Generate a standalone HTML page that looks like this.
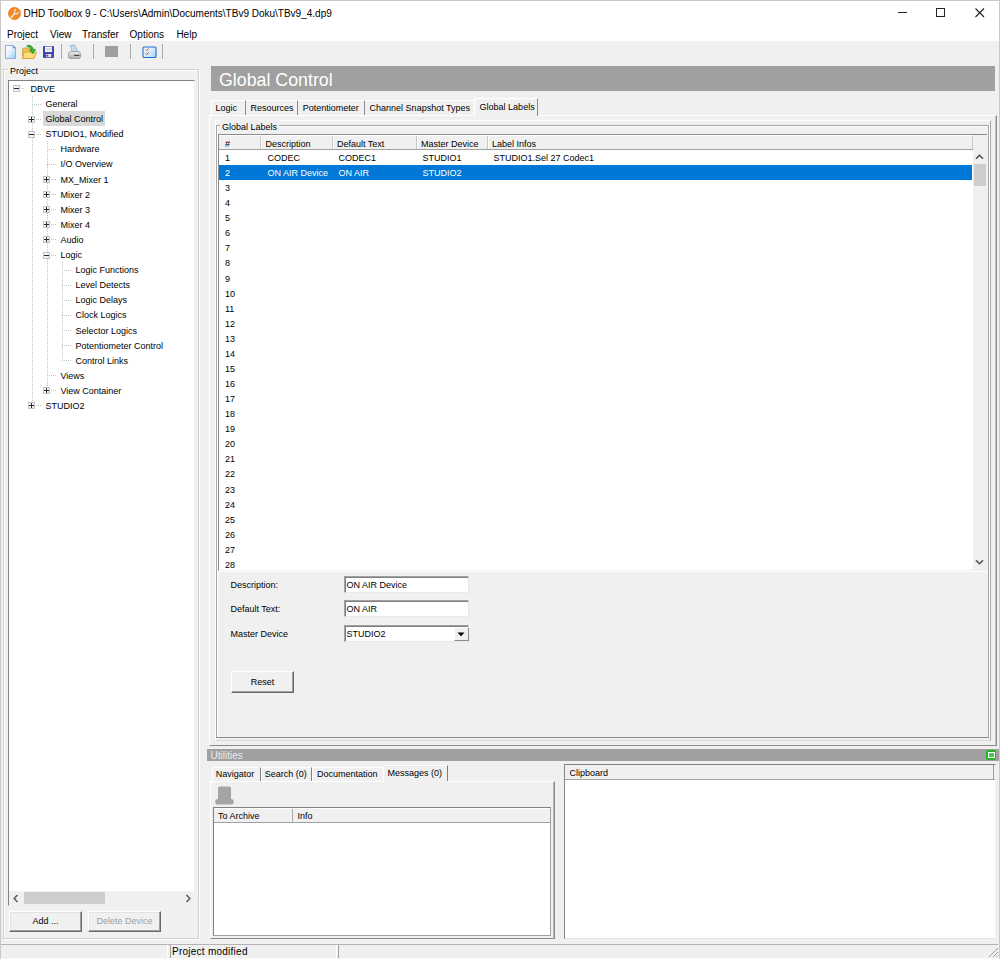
<!DOCTYPE html>
<html><head><meta charset="utf-8"><style>
*{margin:0;padding:0;box-sizing:border-box}
html,body{width:1000px;height:959px;overflow:hidden;background:#f0f0f0;font-family:"Liberation Sans", sans-serif;font-size:9px;color:#000}
.a{position:absolute}
.t{position:absolute;white-space:nowrap;line-height:15px;height:15px}
</style></head><body>
<div class="a" style="left:0;top:0;width:1000px;height:959px;border:1px solid #c9c9c9;border-bottom:none"></div><div class="a" style="left:1px;top:1px;width:998px;height:40px;background:#fff"></div><div class="a" style="left:8px;top:6.5px;width:13px;height:13px;border-radius:50%;background:#f5851f"></div><svg class="a" style="left:8px;top:6.5px" width="13" height="13" viewBox="0 0 13 13"><path d="M3.2 10.3L6.6 6.6" stroke="#ece6e0" stroke-width="1.7" stroke-linecap="round"/><path d="M6.6 6.6L6.4 4.2L7.6 2.6M6.6 6.6L8.9 6.9L10.4 5.7" stroke="#ece6e0" stroke-width="1.4" fill="none" stroke-linecap="round" stroke-linejoin="round"/></svg><div class="t" style="left:23.5px;top:6px;font-size:10px">DHD Toolbox 9 - C:\Users\Admin\Documents\TBv9 Doku\TBv9_4.dp9</div><div class="a" style="left:898px;top:12px;width:9px;height:1px;background:#222"></div><div class="a" style="left:936px;top:8px;width:9px;height:9px;border:1px solid #222"></div><svg class="a" style="left:975px;top:8px" width="10" height="10"><path d="M0.5 0.5L9 9M9 0.5L0.5 9" stroke="#222" stroke-width="1.1"/></svg><div class="t" style="left:7px;top:26.5px;font-size:10px">Project</div><div class="t" style="left:50px;top:26.5px;font-size:10px">View</div><div class="t" style="left:82px;top:26.5px;font-size:10px">Transfer</div><div class="t" style="left:129.6px;top:26.5px;font-size:10px">Options</div><div class="t" style="left:176.4px;top:26.5px;font-size:10px">Help</div><svg class="a" style="left:4px;top:44px" width="14" height="16" viewBox="0 0 14 16">
<defs><linearGradient id="gnd" x1="0" y1="0" x2="1" y2="1"><stop offset="0" stop-color="#ffffff"/><stop offset="0.45" stop-color="#e8f4fc"/><stop offset="1" stop-color="#8fcaf0"/></linearGradient></defs>
<path d="M1.5 1.5H9L11.5 4V14.5H1.5Z" fill="url(#gnd)" stroke="#9ea6dc" stroke-width="1"/>
<path d="M9 1.5V4H11.5Z" fill="#5aa0e0" stroke="#7a9ad8" stroke-width="0.8"/>
</svg><svg class="a" style="left:21px;top:44px" width="17" height="16" viewBox="0 0 17 16">
<path d="M1.5 5.5Q1.5 4 3 4H6.5L7.5 5H12V14.5H2Z" fill="#e8c45a" stroke="#cfa030" stroke-width="1"/>
<path d="M3 8H15.5L13 14.5H1.5Z" fill="#fbdc7c" stroke="#d6a838" stroke-width="1"/>
<path d="M6 1.5Q11 0.5 12.5 5.5L14.5 5.5L11.8 9.8L8.5 5.8L10.5 5.8Q9.5 3 6 2.5Z" fill="#3cb43c" stroke="#1e8a1e" stroke-width="0.7"/>
</svg><svg class="a" style="left:42px;top:45px" width="13" height="14" viewBox="0 0 13 14">
<path d="M1 2Q1 1 2 1H11Q12 1 12 2V12Q12 13 11 13H2Q1 13 1 12Z" fill="#3f47b4"/>
<rect x="3" y="1.6" width="7" height="5.4" fill="#f8f8f8"/>
<rect x="3.6" y="3" width="5.8" height="2.6" fill="#d8d8d8"/>
<rect x="4" y="9" width="5.2" height="3.2" fill="#f0ece0"/>
<rect x="4.5" y="9.6" width="1.8" height="2" fill="#3f47b4"/>
</svg><div class="a" style="left:61px;top:44px;width:1px;height:15px;background:#a8a8a8"></div><div class="a" style="left:93px;top:44px;width:1px;height:15px;background:#a8a8a8"></div><div class="a" style="left:130px;top:44px;width:1px;height:15px;background:#a8a8a8"></div><div class="a" style="left:162px;top:44px;width:1px;height:15px;background:#a8a8a8"></div><svg class="a" style="left:67px;top:44px" width="15" height="16" viewBox="0 0 15 16">
<defs><linearGradient id="gpr" x1="0" y1="0" x2="0" y2="1"><stop offset="0" stop-color="#f4f4f4"/><stop offset="1" stop-color="#a8a8a8"/></linearGradient></defs>
<path d="M3.5 1.5L7.5 1L10.5 7.5L5.5 8.5Z" fill="#bfe0fa" stroke="#8f9ad8" stroke-width="0.7"/>
<path d="M1.5 10Q1.5 7.5 4 7.5H11Q13.5 7.5 13.5 10V12.5Q13.5 14.5 11.5 14.5H3.5Q1.5 14.5 1.5 12.5Z" fill="url(#gpr)" stroke="#909090" stroke-width="0.8"/>
<path d="M7 11.3H12.5" stroke="#2a2a2a" stroke-width="1"/>
<path d="M6 13H12" stroke="#c8c8c8" stroke-width="0.8"/>
</svg><div class="a" style="left:105px;top:45.5px;width:13px;height:11px;background:#a0a0a0"></div><svg class="a" style="left:142px;top:46px" width="15" height="12" viewBox="0 0 15 12">
<defs><linearGradient id="gck" x1="0" y1="0" x2="1" y2="1"><stop offset="0" stop-color="#ffffff"/><stop offset="1" stop-color="#a8d4f4"/></linearGradient></defs>
<rect x="1" y="1" width="13" height="10.5" rx="1" fill="url(#gck)" stroke="#1c6fd0" stroke-width="1.1"/>
<path d="M3.5 3.4L4.7 4.6L6.8 2.6M3.5 7.2L4.7 8.4L6.8 6.4" stroke="#c84a28" stroke-width="1" fill="none"/>
</svg><div class="a" style="left:3px;top:69px;width:196px;height:870px;border:1px solid #cfcfcf;box-shadow:inset 1px 1px 0 #fff,1px 1px 0 #fff"></div><div class="t" style="left:8px;top:64px;padding:0 2px;background:#f0f0f0">Project</div><div class="a" style="left:8px;top:80px;width:187px;height:826px;background:#fff;border-top:1px solid #828282;border-left:1px solid #828282;border-right:1px solid #f0f0f0;border-bottom:1px solid #f0f0f0"></div><div class="a" style="left:32px;top:96px;width:1px;height:310px;background:repeating-linear-gradient(#c4c4c4 0 1px,transparent 1px 2px)"></div><div class="a" style="left:47px;top:141px;width:1px;height:250px;background:repeating-linear-gradient(#c4c4c4 0 1px,transparent 1px 2px)"></div><div class="a" style="left:62px;top:262px;width:1px;height:99px;background:repeating-linear-gradient(#c4c4c4 0 1px,transparent 1px 2px)"></div><div class="a" style="left:21px;top:88px;width:4px;height:1px;background:repeating-linear-gradient(90deg,#c4c4c4 0 1px,transparent 1px 2px)"></div><div class="a" style="left:13px;top:85px;width:7px;height:7px;border:1px solid #c4c4c4;background:linear-gradient(135deg,#fff,#e8e8e8)"></div><div class="a" style="left:14px;top:88px;width:5px;height:1px;background:#2a2a2a"></div><div class="t" style="left:30.5px;top:82.0px">DBVE</div><div class="a" style="left:32px;top:104px;width:8.5px;height:1px;background:repeating-linear-gradient(90deg,#c4c4c4 0 1px,transparent 1px 2px)"></div><div class="t" style="left:45.5px;top:97.095px">General</div><div class="a" style="left:36px;top:119px;width:4.5px;height:1px;background:repeating-linear-gradient(90deg,#c4c4c4 0 1px,transparent 1px 2px)"></div><div class="a" style="left:28px;top:116px;width:7px;height:7px;border:1px solid #c4c4c4;background:linear-gradient(135deg,#fff,#e8e8e8)"></div><div class="a" style="left:29px;top:119px;width:5px;height:1px;background:#2a2a2a"></div><div class="a" style="left:31px;top:117px;width:1px;height:5px;background:#2a2a2a"></div><div class="a" style="left:43px;top:110.69px;width:62px;height:15px;background:#d9d9d9"></div><div class="t" style="left:45.5px;top:112.19px">Global Control</div><div class="a" style="left:36px;top:134px;width:4.5px;height:1px;background:repeating-linear-gradient(90deg,#c4c4c4 0 1px,transparent 1px 2px)"></div><div class="a" style="left:28px;top:131px;width:7px;height:7px;border:1px solid #c4c4c4;background:linear-gradient(135deg,#fff,#e8e8e8)"></div><div class="a" style="left:29px;top:134px;width:5px;height:1px;background:#2a2a2a"></div><div class="t" style="left:45.5px;top:127.285px">STUDIO1, Modified</div><div class="a" style="left:47px;top:149px;width:8.5px;height:1px;background:repeating-linear-gradient(90deg,#c4c4c4 0 1px,transparent 1px 2px)"></div><div class="t" style="left:60.5px;top:142.38px">Hardware</div><div class="a" style="left:47px;top:164px;width:8.5px;height:1px;background:repeating-linear-gradient(90deg,#c4c4c4 0 1px,transparent 1px 2px)"></div><div class="t" style="left:60.5px;top:157.47500000000002px">I/O Overview</div><div class="a" style="left:51px;top:179px;width:4.5px;height:1px;background:repeating-linear-gradient(90deg,#c4c4c4 0 1px,transparent 1px 2px)"></div><div class="a" style="left:43px;top:176px;width:7px;height:7px;border:1px solid #c4c4c4;background:linear-gradient(135deg,#fff,#e8e8e8)"></div><div class="a" style="left:44px;top:179px;width:5px;height:1px;background:#2a2a2a"></div><div class="a" style="left:46px;top:177px;width:1px;height:5px;background:#2a2a2a"></div><div class="t" style="left:60.5px;top:172.57px">MX_Mixer 1</div><div class="a" style="left:51px;top:194px;width:4.5px;height:1px;background:repeating-linear-gradient(90deg,#c4c4c4 0 1px,transparent 1px 2px)"></div><div class="a" style="left:43px;top:191px;width:7px;height:7px;border:1px solid #c4c4c4;background:linear-gradient(135deg,#fff,#e8e8e8)"></div><div class="a" style="left:44px;top:194px;width:5px;height:1px;background:#2a2a2a"></div><div class="a" style="left:46px;top:192px;width:1px;height:5px;background:#2a2a2a"></div><div class="t" style="left:60.5px;top:187.66500000000002px">Mixer 2</div><div class="a" style="left:51px;top:209px;width:4.5px;height:1px;background:repeating-linear-gradient(90deg,#c4c4c4 0 1px,transparent 1px 2px)"></div><div class="a" style="left:43px;top:206px;width:7px;height:7px;border:1px solid #c4c4c4;background:linear-gradient(135deg,#fff,#e8e8e8)"></div><div class="a" style="left:44px;top:209px;width:5px;height:1px;background:#2a2a2a"></div><div class="a" style="left:46px;top:207px;width:1px;height:5px;background:#2a2a2a"></div><div class="t" style="left:60.5px;top:202.76px">Mixer 3</div><div class="a" style="left:51px;top:224px;width:4.5px;height:1px;background:repeating-linear-gradient(90deg,#c4c4c4 0 1px,transparent 1px 2px)"></div><div class="a" style="left:43px;top:221px;width:7px;height:7px;border:1px solid #c4c4c4;background:linear-gradient(135deg,#fff,#e8e8e8)"></div><div class="a" style="left:44px;top:224px;width:5px;height:1px;background:#2a2a2a"></div><div class="a" style="left:46px;top:222px;width:1px;height:5px;background:#2a2a2a"></div><div class="t" style="left:60.5px;top:217.85500000000002px">Mixer 4</div><div class="a" style="left:51px;top:239px;width:4.5px;height:1px;background:repeating-linear-gradient(90deg,#c4c4c4 0 1px,transparent 1px 2px)"></div><div class="a" style="left:43px;top:236px;width:7px;height:7px;border:1px solid #c4c4c4;background:linear-gradient(135deg,#fff,#e8e8e8)"></div><div class="a" style="left:44px;top:239px;width:5px;height:1px;background:#2a2a2a"></div><div class="a" style="left:46px;top:237px;width:1px;height:5px;background:#2a2a2a"></div><div class="t" style="left:60.5px;top:232.95000000000002px">Audio</div><div class="a" style="left:51px;top:255px;width:4.5px;height:1px;background:repeating-linear-gradient(90deg,#c4c4c4 0 1px,transparent 1px 2px)"></div><div class="a" style="left:43px;top:252px;width:7px;height:7px;border:1px solid #c4c4c4;background:linear-gradient(135deg,#fff,#e8e8e8)"></div><div class="a" style="left:44px;top:255px;width:5px;height:1px;background:#2a2a2a"></div><div class="t" style="left:60.5px;top:248.04500000000002px">Logic</div><div class="a" style="left:62px;top:270px;width:8.5px;height:1px;background:repeating-linear-gradient(90deg,#c4c4c4 0 1px,transparent 1px 2px)"></div><div class="t" style="left:75.5px;top:263.14px">Logic Functions</div><div class="a" style="left:62px;top:285px;width:8.5px;height:1px;background:repeating-linear-gradient(90deg,#c4c4c4 0 1px,transparent 1px 2px)"></div><div class="t" style="left:75.5px;top:278.235px">Level Detects</div><div class="a" style="left:62px;top:300px;width:8.5px;height:1px;background:repeating-linear-gradient(90deg,#c4c4c4 0 1px,transparent 1px 2px)"></div><div class="t" style="left:75.5px;top:293.33000000000004px">Logic Delays</div><div class="a" style="left:62px;top:315px;width:8.5px;height:1px;background:repeating-linear-gradient(90deg,#c4c4c4 0 1px,transparent 1px 2px)"></div><div class="t" style="left:75.5px;top:308.425px">Clock Logics</div><div class="a" style="left:62px;top:330px;width:8.5px;height:1px;background:repeating-linear-gradient(90deg,#c4c4c4 0 1px,transparent 1px 2px)"></div><div class="t" style="left:75.5px;top:323.52px">Selector Logics</div><div class="a" style="left:62px;top:345px;width:8.5px;height:1px;background:repeating-linear-gradient(90deg,#c4c4c4 0 1px,transparent 1px 2px)"></div><div class="t" style="left:75.5px;top:338.615px">Potentiometer Control</div><div class="a" style="left:62px;top:360px;width:8.5px;height:1px;background:repeating-linear-gradient(90deg,#c4c4c4 0 1px,transparent 1px 2px)"></div><div class="t" style="left:75.5px;top:353.71000000000004px">Control Links</div><div class="a" style="left:47px;top:375px;width:8.5px;height:1px;background:repeating-linear-gradient(90deg,#c4c4c4 0 1px,transparent 1px 2px)"></div><div class="t" style="left:60.5px;top:368.805px">Views</div><div class="a" style="left:51px;top:390px;width:4.5px;height:1px;background:repeating-linear-gradient(90deg,#c4c4c4 0 1px,transparent 1px 2px)"></div><div class="a" style="left:43px;top:387px;width:7px;height:7px;border:1px solid #c4c4c4;background:linear-gradient(135deg,#fff,#e8e8e8)"></div><div class="a" style="left:44px;top:390px;width:5px;height:1px;background:#2a2a2a"></div><div class="a" style="left:46px;top:388px;width:1px;height:5px;background:#2a2a2a"></div><div class="t" style="left:60.5px;top:383.90000000000003px">View Container</div><div class="a" style="left:36px;top:405px;width:4.5px;height:1px;background:repeating-linear-gradient(90deg,#c4c4c4 0 1px,transparent 1px 2px)"></div><div class="a" style="left:28px;top:402px;width:7px;height:7px;border:1px solid #c4c4c4;background:linear-gradient(135deg,#fff,#e8e8e8)"></div><div class="a" style="left:29px;top:405px;width:5px;height:1px;background:#2a2a2a"></div><div class="a" style="left:31px;top:403px;width:1px;height:5px;background:#2a2a2a"></div><div class="t" style="left:45.5px;top:398.995px">STUDIO2</div><div class="a" style="left:9px;top:891px;width:185px;height:14px;background:#f0f0f0"></div><div class="a" style="left:24px;top:892px;width:81px;height:12px;background:#cdcdcd"></div><svg class="a" style="left:13px;top:894px" width="6" height="9"><path d="M4.5 1L1.2 4.5L4.5 8" stroke="#606060" stroke-width="1.6" fill="none"/></svg><svg class="a" style="left:185px;top:894px" width="6" height="9"><path d="M1.5 1L4.8 4.5L1.5 8" stroke="#606060" stroke-width="1.6" fill="none"/></svg><div class="a" style="left:9px;top:911px;width:73px;height:21px;background:#f0f0f0;border-top:1px solid #fff;border-left:1px solid #fff;border-right:1px solid #696969;border-bottom:1px solid #696969;box-shadow:inset -1px -1px 0 #a0a0a0,inset 1px 1px 0 #e3e3e3"></div><div class="t" style="left:9px;top:914.0px;width:73px;text-align:center;color:#000">Add ...</div><div class="a" style="left:88px;top:911px;width:73px;height:21px;background:#f0f0f0;border-top:1px solid #fff;border-left:1px solid #fff;border-right:1px solid #696969;border-bottom:1px solid #696969;box-shadow:inset -1px -1px 0 #a0a0a0,inset 1px 1px 0 #e3e3e3"></div><div class="t" style="left:88px;top:914.0px;width:73px;text-align:center;color:#a0a0a0">Delete Device</div><div class="a" style="left:211px;top:66px;width:784px;height:25px;background:#a0a0a0"></div><div class="t" style="left:219px;top:68px;height:24px;line-height:24px;font-size:17.8px;color:#fff">Global Control</div><div class="a" style="left:209px;top:115px;width:788px;height:631px;border-top:1px solid #fff;border-left:1px solid #fff;border-right:1px solid #8c8c8c;border-bottom:1px solid #8c8c8c;box-shadow:inset -1px 0 0 #c4c4c4"></div><div class="a" style="left:211px;top:100px;width:35px;height:15px;border-top:1px solid #fff;border-left:1px solid #fff;border-right:1px solid #8c8c8c"></div><div class="t" style="left:215.5px;top:101px">Logic</div><div class="a" style="left:246px;top:100px;width:52px;height:15px;border-top:1px solid #fff;border-right:1px solid #8c8c8c"></div><div class="t" style="left:250.6px;top:101px">Resources</div><div class="a" style="left:298px;top:100px;width:67px;height:15px;border-top:1px solid #fff;border-right:1px solid #8c8c8c"></div><div class="t" style="left:302.8px;top:101px">Potentiometer</div><div class="a" style="left:365px;top:100px;width:110px;height:15px;border-top:1px solid #fff;border-right:1px solid #8c8c8c"></div><div class="t" style="left:369.6px;top:101px">Channel Snapshot Types</div><div class="a" style="left:474px;top:98px;width:64px;height:18px;background:#f0f0f0;border-top:1px solid #fff;border-left:1px solid #fff;border-right:1px solid #8c8c8c"></div><div class="t" style="left:479.6px;top:100px">Global Labels</div><div class="a" style="left:215px;top:120px;width:776px;height:621px;border-top:1px solid #fff;border-left:1px solid #fff;border-right:1px solid #a8a8a8;border-bottom:1px solid #d8d8d8"></div><div class="a" style="left:216px;top:125px;width:773px;height:613px;border-top:1px solid #a8a8a8;border-left:1px solid #a8a8a8;border-right:1px solid #a8a8a8;border-bottom:1px solid #8c8c8c;box-shadow:inset 1px 1px 0 #fff"></div><div class="a" style="left:989px;top:125px;width:1px;height:613px;background:#fff"></div><div class="t" style="left:220px;top:120px;padding:0 2px;background:#f0f0f0">Global Labels</div><div class="a" style="left:218px;top:571px;width:770px;height:1px;background:#fff"></div><div class="a" style="left:218px;top:134px;width:769px;height:437px;background:#fff;border-top:1px solid #8c8c8c;border-left:1px solid #8c8c8c;border-bottom:1px solid #f0f0f0"></div><div class="a" style="left:219px;top:135px;width:754px;height:15px;background:#f0f0f0;border-bottom:1px solid #a0a0a0;border-top:1px solid #fff"></div><div class="t" style="left:225px;top:137px">#</div><div class="t" style="left:265.5px;top:137px">Description</div><div class="t" style="left:337px;top:137px">Default Text</div><div class="t" style="left:421px;top:137px">Master Device</div><div class="t" style="left:492px;top:137px">Label Infos</div><div class="a" style="left:260px;top:136px;width:1px;height:13px;background:#c8c8c8"></div><div class="a" style="left:261px;top:136px;width:1px;height:13px;background:#fff"></div><div class="a" style="left:332px;top:136px;width:1px;height:13px;background:#c8c8c8"></div><div class="a" style="left:333px;top:136px;width:1px;height:13px;background:#fff"></div><div class="a" style="left:416px;top:136px;width:1px;height:13px;background:#c8c8c8"></div><div class="a" style="left:417px;top:136px;width:1px;height:13px;background:#fff"></div><div class="a" style="left:487px;top:136px;width:1px;height:13px;background:#c8c8c8"></div><div class="a" style="left:488px;top:136px;width:1px;height:13px;background:#fff"></div><div class="a" style="left:972px;top:136px;width:1px;height:13px;background:#c8c8c8"></div><div class="a" style="left:973px;top:136px;width:1px;height:13px;background:#fff"></div><div class="t" style="left:225px;top:151px;color:#000">1</div><div class="t" style="left:267.5px;top:151px">CODEC</div><div class="t" style="left:338.5px;top:151px">CODEC1</div><div class="t" style="left:422.5px;top:151px">STUDIO1</div><div class="t" style="left:493.5px;top:151px">STUDIO1.Sel 27 Codec1</div><div class="a" style="left:219px;top:165px;width:753px;height:15px;background:#0078d7"></div><div class="t" style="left:225px;top:166px;color:#fff">2</div><div class="t" style="left:267.5px;top:166px;color:#fff">ON AIR Device</div><div class="t" style="left:338.5px;top:166px;color:#fff">ON AIR</div><div class="t" style="left:422.5px;top:166px;color:#fff">STUDIO2</div><div class="t" style="left:225px;top:181px;color:#000">3</div><div class="t" style="left:225px;top:196px;color:#000">4</div><div class="t" style="left:225px;top:211px;color:#000">5</div><div class="t" style="left:225px;top:226px;color:#000">6</div><div class="t" style="left:225px;top:241px;color:#000">7</div><div class="t" style="left:225px;top:256px;color:#000">8</div><div class="t" style="left:225px;top:272px;color:#000">9</div><div class="t" style="left:225px;top:287px;color:#000">10</div><div class="t" style="left:225px;top:302px;color:#000">11</div><div class="t" style="left:225px;top:317px;color:#000">12</div><div class="t" style="left:225px;top:332px;color:#000">13</div><div class="t" style="left:225px;top:347px;color:#000">14</div><div class="t" style="left:225px;top:362px;color:#000">15</div><div class="t" style="left:225px;top:377px;color:#000">16</div><div class="t" style="left:225px;top:392px;color:#000">17</div><div class="t" style="left:225px;top:407px;color:#000">18</div><div class="t" style="left:225px;top:422px;color:#000">19</div><div class="t" style="left:225px;top:437px;color:#000">20</div><div class="t" style="left:225px;top:452px;color:#000">21</div><div class="t" style="left:225px;top:467px;color:#000">22</div><div class="t" style="left:225px;top:483px;color:#000">23</div><div class="t" style="left:225px;top:498px;color:#000">24</div><div class="t" style="left:225px;top:513px;color:#000">25</div><div class="t" style="left:225px;top:528px;color:#000">26</div><div class="t" style="left:225px;top:543px;color:#000">27</div><div class="t" style="left:225px;top:558px;color:#000">28</div><div class="a" style="left:973px;top:135px;width:14px;height:435px;background:#f0f0f0"></div><div class="a" style="left:973.5px;top:164px;width:12.5px;height:22px;background:#cdcdcd"></div><svg class="a" style="left:975px;top:154px" width="9" height="6"><path d="M1 4.8L4.5 1.3L8 4.8" stroke="#505050" stroke-width="1.6" fill="none"/></svg><svg class="a" style="left:975px;top:559px" width="9" height="6"><path d="M1 1.2L4.5 4.7L8 1.2" stroke="#505050" stroke-width="1.6" fill="none"/></svg><div class="t" style="left:230.5px;top:578px">Description:</div><div class="t" style="left:230.5px;top:602px">Default Text:</div><div class="t" style="left:230.5px;top:627px">Master Device</div><div class="a" style="left:344px;top:576px;width:125px;height:17px;background:#fff;border-top:1px solid #a0a0a0;border-left:1px solid #a0a0a0;border-right:1px solid #e8e8e8;border-bottom:1px solid #e8e8e8;box-shadow:inset 1px 1px 0 #808080"></div><div class="t" style="left:346.5px;top:578px">ON AIR Device</div><div class="a" style="left:344px;top:600px;width:125px;height:17px;background:#fff;border-top:1px solid #a0a0a0;border-left:1px solid #a0a0a0;border-right:1px solid #e8e8e8;border-bottom:1px solid #e8e8e8;box-shadow:inset 1px 1px 0 #808080"></div><div class="t" style="left:346.5px;top:602px">ON AIR</div><div class="a" style="left:344px;top:625px;width:125px;height:17px;background:#fff;border-top:1px solid #a0a0a0;border-left:1px solid #a0a0a0;border-right:1px solid #e8e8e8;border-bottom:1px solid #e8e8e8;box-shadow:inset 1px 1px 0 #808080"></div><div class="t" style="left:346.5px;top:627px">STUDIO2</div><div class="a" style="left:454px;top:627px;width:15px;height:14px;background:#f0f0f0;border-top:1px solid #fff;border-left:1px solid #fff;border-right:1px solid #8c8c8c;border-bottom:1px solid #8c8c8c"></div><svg class="a" style="left:457px;top:631.5px" width="9" height="5"><path d="M0.5 0.5H7.5L4 4.2Z" fill="#000"/></svg><div class="a" style="left:231px;top:671px;width:63px;height:22px;background:#f0f0f0;border-top:1px solid #fff;border-left:1px solid #fff;border-right:1px solid #696969;border-bottom:1px solid #696969;box-shadow:inset -1px -1px 0 #a0a0a0"></div><div class="t" style="left:231px;top:674.5px;width:63px;text-align:center">Reset</div><div class="a" style="left:207px;top:749px;width:792px;height:12px;background:#a0a0a0"></div><div class="t" style="left:210.5px;top:748px;font-size:10px;line-height:15px;color:#ececec">Utilities</div><div class="a" style="left:986px;top:750px;width:10px;height:10px;border-radius:2px;background:#22b722"></div><div class="a" style="left:987.5px;top:752px;width:7px;height:6px;background:#4ccc4c;border:1px solid #fff"></div><div class="a" style="left:212px;top:767px;width:48.60000000000002px;height:14px;border-top:1px solid #fff;border-left:1px solid #fff;border-right:1px solid #808080"></div><div class="t" style="left:215.8px;top:767px">Navigator</div><div class="a" style="left:260.6px;top:767px;width:51.599999999999966px;height:14px;border-top:1px solid #fff;border-left:1px solid #fff;border-right:1px solid #808080"></div><div class="t" style="left:264.8px;top:767px">Search (0)</div><div class="a" style="left:312.2px;top:767px;width:71.40000000000003px;height:14px;border-top:1px solid #fff;border-left:1px solid #fff;border-right:1px solid #808080"></div><div class="t" style="left:317px;top:767px">Documentation</div><div class="a" style="left:382.5px;top:765px;width:65px;height:17px;background:#f0f0f0;border-top:1px solid #fff;border-left:1px solid #fff;border-right:1px solid #808080"></div><div class="t" style="left:387.4px;top:765.5px">Messages (0)</div><div class="a" style="left:210px;top:781px;width:345px;height:158px;border-top:1px solid #fff;border-left:1px solid #fff;border-right:1px solid #8c8c8c;border-bottom:1px solid #8c8c8c;box-shadow:inset -1px 0 0 #b8b8b8"></div><div class="a" style="left:383.5px;top:780.5px;width:63px;height:1.5px;background:#f0f0f0"></div><svg class="a" style="left:214px;top:785px" width="21" height="21" viewBox="0 0 21 21">
<path d="M4 3Q4 1.5 5.5 1.5H15.5Q17 1.5 17 3V15H4Z" fill="#a4a4a4"/>
<path d="M1.2 16.5Q1.2 14 3.5 14H17.5Q19.8 14 19.8 16.5Q19.8 19.5 17.5 19.5H3.5Q1.2 19.5 1.2 16.5Z" fill="#a4a4a4"/>
</svg><div class="a" style="left:213px;top:807px;width:338px;height:129px;background:#fff;border-top:1px solid #828282;border-left:1px solid #828282;border-right:1px solid #a0a0a0;border-bottom:1px solid #a0a0a0"></div><div class="a" style="left:214px;top:808px;width:336px;height:14.5px;background:#f0f0f0;border-bottom:1px solid #a0a0a0;border-top:1px solid #fff"></div><div class="t" style="left:218px;top:808.5px">To Archive</div><div class="t" style="left:297.5px;top:808.5px">Info</div><div class="a" style="left:292px;top:809px;width:1px;height:13px;background:#a8a8a8"></div><div class="a" style="left:564px;top:764px;width:432px;height:175px;background:#fff;border-top:1px solid #828282;border-left:1px solid #828282;border-right:1px solid #f0f0f0;border-bottom:1px solid #e3e3e3"></div><div class="a" style="left:565px;top:765px;width:430px;height:14.5px;background:#f0f0f0;border-bottom:1px solid #a0a0a0"></div><div class="t" style="left:569.5px;top:766px">Clipboard</div><div class="a" style="left:993px;top:765px;width:1px;height:14px;background:#a0a0a0"></div><div class="a" style="left:1px;top:958px;width:998px;height:1px;background:#f8f8f8"></div><div class="a" style="left:1px;top:944px;width:997px;height:1px;background:#b4b4b4"></div><div class="a" style="left:1px;top:945px;width:167px;height:13px;border-right:1px solid #fff"></div><div class="a" style="left:170px;top:945px;width:167px;height:13px;border-left:1px solid #a0a0a0;border-right:1px solid #fff"></div><div class="a" style="left:338px;top:945px;width:661px;height:13px;border-left:1px solid #a0a0a0"></div><div class="t" style="left:172px;top:943.5px;font-size:10px;letter-spacing:0.25px">Project modified</div><svg class="a" style="left:988px;top:947px" width="11" height="11"><path d="M10 1L1 10M10 5L5 10M10 8.5L8.5 10" stroke="#a0a0a0" stroke-width="1"/></svg></body></html>
